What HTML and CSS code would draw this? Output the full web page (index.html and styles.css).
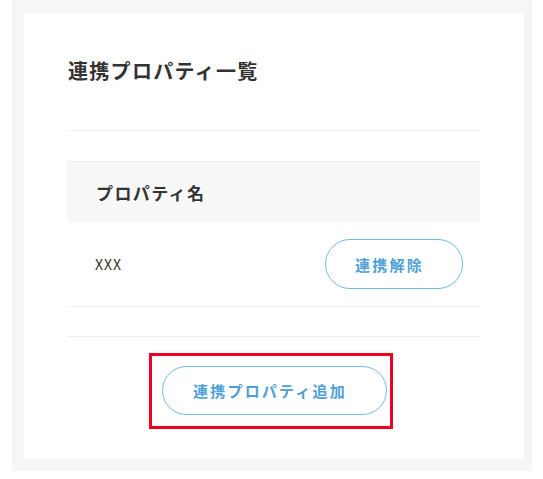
FILE: index.html
```html
<!DOCTYPE html>
<html lang="ja">
<head>
<meta charset="utf-8">
<title>連携プロパティ一覧</title>
<link rel="stylesheet" href="styles.css">
</head>
<body>
<div class="page">
  <section class="card">
    <h2 class="card-title">連携プロパティ一覧</h2>
    <div class="table">
      <div class="table-head">プロパティ名</div>
      <div class="table-row">
        <span class="cell-name">XXX</span>
        <button class="btn btn-unlink" type="button">連携解除</button>
      </div>
    </div>
    <div class="card-footer">
      <div class="highlight">
        <button class="btn btn-add" type="button">連携プロパティ追加</button>
      </div>
    </div>
  </section>
</div>
</body>
</html>
```
FILE: styles.css
```css
* { box-sizing: border-box; }

html, body {
  margin: 0;
  padding: 0;
  background: #ffffff;
  font-family: "Noto Sans CJK JP", "Noto Sans", sans-serif;
  color: #333333;
}

.page {
  margin-left: 12px;
  width: 520px;
  padding: 13px 8px 12px 12px;
  background: #f6f6f6;
}

.card {
  background: #ffffff;
  padding: 0 44px 30px 43px;
}

.card-title {
  margin: 0;
  padding: 43px 0 44px 1px;
  font-size: 20px;
  line-height: 30px;
  font-weight: 700;
  letter-spacing: 1.3px;
  color: #333333;
  border-bottom: 1px solid #eeeeee;
}

.table {
  margin-top: 30px;
}

.table-head {
  height: 61px;
  border-top: 1px solid #ececec;
  background: #f8f8f8;
  padding-left: 29px;
  display: flex;
  align-items: center;
  font-size: 17px;
  font-weight: 700;
  letter-spacing: 1.4px;
  color: #333333;
}

.table-row {
  height: 85px;
  border-bottom: 1px solid #eeeeee;
  display: flex;
  align-items: center;
  justify-content: space-between;
  padding: 0 17px 0 28px;
}

.cell-name {
  font-size: 14px;
  letter-spacing: 1px;
  color: #333333;
}

.btn {
  font-family: "Noto Sans CJK JP", "Noto Sans", sans-serif;
  background: #ffffff;
  border: 1.5px solid #72b9e1;
  border-radius: 999px;
  color: #4e9fd6;
  font-size: 15px;
  font-weight: 700;
  letter-spacing: 2.2px;
  padding: 0 9px 0 0;
  display: flex;
  align-items: center;
  justify-content: center;
  cursor: pointer;
}

.btn-unlink {
  width: 138px;
  height: 50px;
}

.btn-add {
  width: 225px;
  height: 49px;
}

.card-footer {
  margin-top: 29px;
  border-top: 1px solid #eeeeee;
  padding: 16px 5px 0 0;
  display: flex;
  justify-content: center;
}

.highlight {
  border: 3px solid #ee0022;
  padding: 10px 3px 11px 10px;
}
```
